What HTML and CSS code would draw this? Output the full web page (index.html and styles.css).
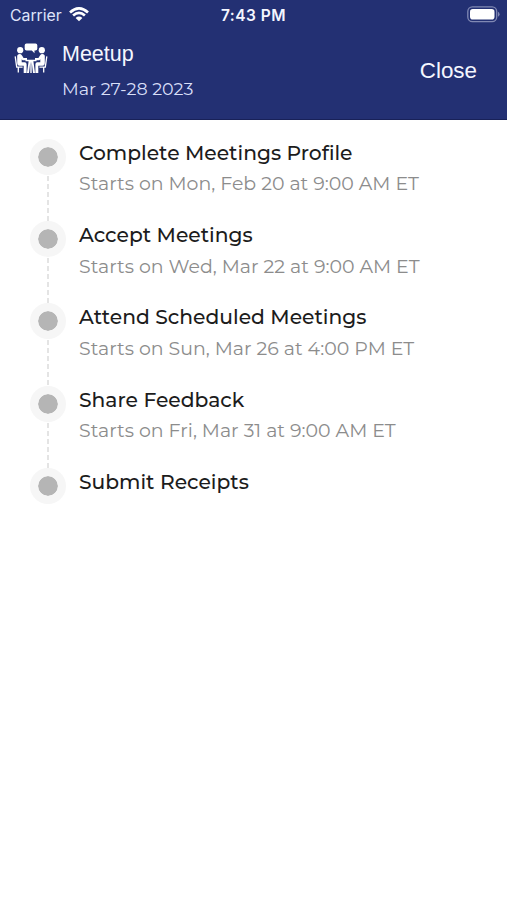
FILE: index.html
```html
<!DOCTYPE html>
<html lang="en">
<head>
<meta charset="utf-8">
<meta name="viewport" content="width=device-width, initial-scale=1">
<title>Meetup</title>
<link rel="stylesheet" href="styles.css">
</head>
<body>
<header class="header">
  <div class="status">
    <div class="carrier"><span>Carrier</span>
      <svg class="wifi" width="20" height="15" viewBox="0 0 20 15" fill="none" stroke="#fff" stroke-width="2.7"><path d="M1 5.4Q10-2.6 19 5.4M4.1 8.6Q10 3.3 15.9 8.6"/><path d="M10 14.3 6.6 10.9Q10 8.1 13.4 10.9Z" fill="#fff" stroke="none"/></svg>
    </div>
    <div class="time">7:43 PM</div>
    <svg class="battery" width="33" height="17" viewBox="0 0 33 17"><rect x=".8" y=".8" width="28.9" height="14.9" rx="4.6" fill="none" stroke="#8088b3" stroke-width="1.3"/><rect x="3" y="3" width="24.5" height="10.5" rx="2.8" fill="#fff"/><path d="M31 5.8Q32.6 6.4 32.6 8.2T31 10.7Z" fill="#8088b3"/></svg>
  </div>
  <div class="bar">
    <svg class="logo" width="34" height="31" viewBox="0 0 34 31" fill="#fff">
      <path d="M12.5.5H21.5Q23.3.5 23.3 2.3V5.7Q23.3 7.5 21.5 7.5H20.5V10.2L17.8 7.5H12.5Q10.7 7.5 10.7 5.7V2.3Q10.7.5 12.5.5Z"/>
      <circle cx="6.2" cy="7.2" r="3.1"/><circle cx="27.8" cy="7.2" r="3.1"/>
      <path id="person" d="M4.5 11.2Q6.7 10.4 8 12.4L9.6 15.1H13V17.2H8.6L7.7 16.2V19.3H10.7Q12.6 19.3 12.6 21.2V30H9.7V22.8H5.5Q3.2 22.8 3.2 20.3V13Q3.2 11.6 4.5 11.2Z"/>
      <use href="#person" transform="translate(34) scale(-1 1)"/>
      <path d="M11.5 16.7H22.5V18.2H19.4L21 30H19L17.7 18.7V30H16.3V18.7L15 30H13L14.6 18.2H11.5Z"/>
      <path d="M1.2 13.3 2.7 24.1H8.6M4.3 24V29.5M32.8 13.3 31.3 24.1H25.4M29.7 24V29.5" fill="none" stroke="#fff" stroke-width="1.3"/>
    </svg>
    <div class="event"><div class="name">Meetup</div><div class="date">Mar 27-28 2023</div></div>
    <div class="close">Close</div>
  </div>
</header>
<main class="timeline">
  <section class="step"><div class="rail"><i class="dot"></i><i class="line"></i></div><div><h2>Complete Meetings Profile</h2><p>Starts on Mon, Feb 20 at 9:00 AM ET</p></div></section>
  <section class="step"><div class="rail"><i class="dot"></i><i class="line"></i></div><div><h2>Accept Meetings</h2><p>Starts on Wed, Mar 22 at 9:00 AM ET</p></div></section>
  <section class="step"><div class="rail"><i class="dot"></i><i class="line"></i></div><div><h2>Attend Scheduled Meetings</h2><p>Starts on Sun, Mar 26 at 4:00 PM ET</p></div></section>
  <section class="step"><div class="rail"><i class="dot"></i><i class="line"></i></div><div><h2>Share Feedback</h2><p>Starts on Fri, Mar 31 at 9:00 AM ET</p></div></section>
  <section class="step"><div class="rail"><i class="dot"></i></div><div><h2>Submit Receipts</h2></div></section>
</main>
</body>
</html>
```
FILE: styles.css
```css
* { box-sizing: border-box; }
body { margin: 0; background: #fff; color: #1c1c1c; font-family: Montserrat, Inter, sans-serif; }
.header { height: 120px; background: #233073; color: #f4f6ff; border-bottom: 1px solid #182158; }
.status { height: 30px; display: grid; grid-template-columns: 1fr auto 1fr; align-items: center; padding: 0 8px 0 10px; font-family: Inter, sans-serif; font-size: 15.8px; }
.carrier { display: flex; align-items: center; gap: 7px; color: #dfe4fa; }
.wifi { margin-top: -1px; }
.time { margin-right: 2px; font-weight: 600; font-size: 15.5px; letter-spacing: .5px; }
.battery { justify-self: end; margin: -2px -1px 0 0; }
.bar { display: flex; padding: 0 30px 0 14px; }
.logo { margin-top: 13px; }
.event { margin-left: 14px; flex: 1; }
.name { margin-top: 9px; font: 21.5px/30px "Liberation Sans", sans-serif; }
.date { margin-top: 6px; font-size: 17.5px; line-height: 28px; color: #d9dff8; }
.close { margin-top: 26px; font: 22.4px/30px "Liberation Sans", sans-serif; }
.timeline { padding: 19px 0 0 30px; }
.step { display: flex; height: 82.2px; }
.rail { width: 36px; margin-right: 13px; display: flex; flex-direction: column; align-items: center; }
.dot { flex: none; width: 36px; height: 36px; border-radius: 50%; border: 8px solid #f6f6f6; background: #b5b5b5; background-clip: padding-box; }
.line { width: 2px; flex: 1; background: repeating-linear-gradient(transparent 0 1px, #e4e4e4 1px 6px, transparent 6px 8px); }
h2 { margin: 0; font-size: 20.25px; line-height: 28px; font-weight: 500; white-space: nowrap; }
p { margin: 3.4px 0 0; font-size: 18.95px; line-height: 28px; font-weight: 400; color: #8c8c8c; white-space: nowrap; }
```
